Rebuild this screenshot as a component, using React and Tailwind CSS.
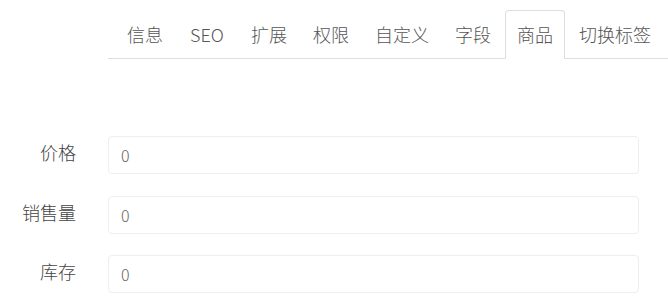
const tabs = ['信息', 'SEO', '扩展', '权限', '自定义', '字段', '商品', '切换标签'];
const fields = [
  { label: '价格', value: '0', mt: 'mt-0' },
  { label: '销售量', value: '0', mt: 'mt-[22px]' },
  { label: '库存', value: '0', mt: 'mt-[21px]' },
];

export default function App() {
  const active = '商品';
  return (
    <div
      className="w-full h-[300px] bg-white overflow-hidden pt-[10px] font-light"
      style={{ fontFamily: '"Noto Sans CJK SC", "Liberation Sans", sans-serif' }}
    >
      {/* Tabs */}
      <ul className="ml-[108px] flex pl-[7px] border-b border-[#dddddd]">
        {tabs.map(t => (
          <li
            key={t}
            className={
              'h-[49px] -mb-px mr-[2px] flex items-center justify-center px-[11px] min-w-[60px] rounded-t-[4px] border text-[18px] text-[#555555] ' +
              (t === active ? 'border-[#dddddd] border-b-white bg-white' : 'border-transparent')
            }
          >
            {t}
          </li>
        ))}
      </ul>

      {/* Form */}
      <div className="mt-[77px]">
        {fields.map(f => (
          <div key={f.label} className={'flex items-center h-[38px] ' + f.mt}>
            <label className="w-[108px] pr-[32px] text-right text-[18px] leading-none text-[#444444] -mt-[6px]">
              {f.label}
            </label>
            <input
              readOnly
              value={f.value}
              className="flex-1 mr-[29px] h-[38px] px-[12px] border border-[#eeeeee] rounded-[4px] text-[16px] font-light text-[#666666] outline-none"
            />
          </div>
        ))}
      </div>
    </div>
  );
}
